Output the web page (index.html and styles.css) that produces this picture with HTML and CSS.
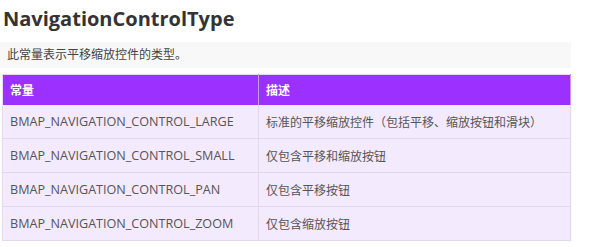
FILE: index.html
```html
<!DOCTYPE html>
<html lang="zh">
  <head>
    <meta charset="UTF-8" />
    <meta name="viewport" content="width=device-width, initial-scale=1.0" />
    <title>NavigationControlType</title>
    <link rel="stylesheet" href="styles.css">
  </head>
  <body>
    <div class="content">
      <h2 class="title">NavigationControlType</h2>
      <p class="summary">此常量表示平移缩放控件的类型。</p>

      <table class="const-table">
        <thead>
          <tr>
            <th>常量</th>
            <th>描述</th>
          </tr>
        </thead>
        <tbody>
          <tr>
            <td>BMAP_NAVIGATION_CONTROL_LARGE</td>
            <td>标准的平移缩放控件（包括平移、缩放按钮和滑块）</td>
          </tr>
          <tr>
            <td>BMAP_NAVIGATION_CONTROL_SMALL</td>
            <td>仅包含平移和缩放按钮</td>
          </tr>
          <tr>
            <td>BMAP_NAVIGATION_CONTROL_PAN</td>
            <td>仅包含平移按钮</td>
          </tr>
          <tr>
            <td>BMAP_NAVIGATION_CONTROL_ZOOM</td>
            <td>仅包含缩放按钮</td>
          </tr>
        </tbody>
      </table>
    </div>
  </body>
</html>
```

FILE: styles.css
```css
body {
  font-family: "Open Sans", "Noto Sans CJK SC", sans-serif;
  background: #fff;
  color: #555;
  margin: 0;
  padding: 0;
}
.content {
  width: 571px;
  padding: 5px 0 0 0;
}
.title {
  margin: 0 0 9px 3px;
  font-size: 20px;
  line-height: 28px;
  font-weight: bold;
  color: #333;
}
.summary {
  margin: 0 0 6px 0;
  padding: 0 7px;
  background: #f8f8f8;
  font-size: 12px;
  line-height: 26px;
  color: #444;
}
.const-table {
  border-collapse: collapse;
  width: 569px;
  margin-left: 2px;
  background: #f4eafe;
  border: 1px solid #e6dcef;
  box-shadow: 0 1px 2px rgba(0, 0, 0, 0.06);
}
.const-table th,
.const-table td {
  text-align: left;
  padding: 0 7px;
  font-size: 12px;
}
.const-table th {
  background: #9b30ff;
  color: #fff;
  font-weight: bold;
  height: 30px;
  border-right: 1px solid #c79cf5;
}
.const-table td {
  height: 33px;
  border-bottom: 1px solid #e2d7ec;
  border-right: 1px solid #e2d7ec;
}
.const-table td:first-child {
  font-size: 12.6px;
}
.const-table th:first-child,
.const-table td:first-child {
  width: 241px;
}
```
